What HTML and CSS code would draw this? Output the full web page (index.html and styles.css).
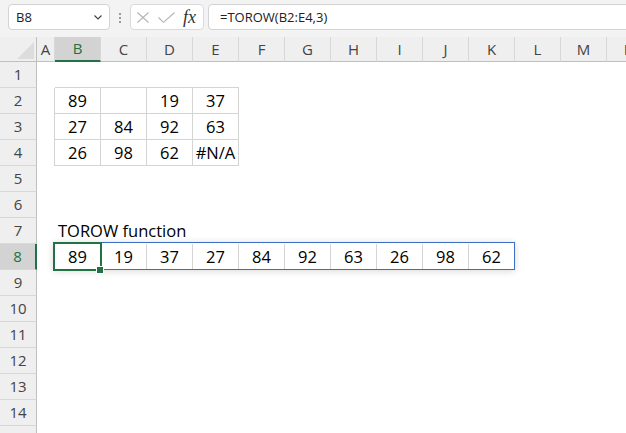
FILE: index.html
```html
<!DOCTYPE html>
<html lang="en">
<head>
<meta charset="utf-8">
<title>TOROW function</title>
<link rel="stylesheet" href="styles.css">
</head>
<body>
<div class="toolbar">
  <div class="namebox"><span>B8</span><svg class="chev" width="8" height="5" viewBox="0 0 8 5"><polyline points="0.5,0.5 4,4 7.5,0.5" fill="none" stroke="#444" stroke-width="1.2"/></svg></div>
  <div class="grip"><span></span><span></span><span></span></div>
  <div class="fxbox">
    <svg class="ic-x" width="12" height="11" viewBox="0 0 12 11"><path d="M0.5 0.5 L11.5 10.5 M11.5 0.5 L0.5 10.5" stroke="#b4b4b4" stroke-width="1.1" fill="none"/></svg>
    <svg class="ic-ok" width="17" height="11" viewBox="0 0 17 11"><polyline points="0.5,5.5 5.5,10.3 16.5,0.5" stroke="#b4b4b4" stroke-width="1.1" fill="none"/></svg>
    <span class="fx">fx</span>
  </div>
  <div class="formula">=TOROW(B2:E4,3)</div>
</div>
<div class="sheet">
  <div class="row hrow">
    <div class="corner"><svg width="17" height="17" viewBox="0 0 17 17"><polygon points="17,0 17,17 0,17" fill="#dcdcdc"/></svg></div>
    <div class="ch">A</div><div class="ch sel">B</div><div class="ch">C</div><div class="ch">D</div><div class="ch">E</div><div class="ch">F</div><div class="ch">G</div><div class="ch">H</div><div class="ch">I</div><div class="ch">J</div><div class="ch">K</div><div class="ch">L</div><div class="ch">M</div><div class="ch">N</div>
  </div>
  <div class="row"><div class="rh">1</div><div class="c"></div><div class="c bb"></div><div class="c bb"></div><div class="c bb"></div><div class="c bb"></div></div>
  <div class="row"><div class="rh">2</div><div class="c br"></div><div class="c b">89</div><div class="c b"></div><div class="c b">19</div><div class="c b">37</div></div>
  <div class="row"><div class="rh">3</div><div class="c br"></div><div class="c b">27</div><div class="c b">84</div><div class="c b">92</div><div class="c b">63</div></div>
  <div class="row"><div class="rh">4</div><div class="c br"></div><div class="c b">26</div><div class="c b">98</div><div class="c b">62</div><div class="c b">#N/A</div></div>
  <div class="row"><div class="rh">5</div></div>
  <div class="row"><div class="rh">6</div></div>
  <div class="row"><div class="rh">7</div><div class="c"></div><div class="c label">TOROW function</div></div>
  <div class="row"><div class="rh sel">8</div><div class="c"></div>
    <div class="c s active">89<div class="spill"></div><div class="cursor"></div><div class="handle"></div></div>
    <div class="c s">19</div><div class="c s">37</div><div class="c s">27</div><div class="c s">84</div><div class="c s">92</div><div class="c s">63</div><div class="c s">26</div><div class="c s">98</div><div class="c s">62</div>
  </div>
  <div class="row"><div class="rh">9</div></div>
  <div class="row"><div class="rh">10</div></div>
  <div class="row"><div class="rh">11</div></div>
  <div class="row"><div class="rh">12</div></div>
  <div class="row"><div class="rh">13</div></div>
  <div class="row"><div class="rh">14</div></div>
  <div class="row"><div class="rh">15</div></div>
</div>
</body>
</html>
```
FILE: styles.css
```css
* { box-sizing: border-box; }
html, body { margin: 0; padding: 0; }
body {
  width: 626px;
  height: 433px;
  overflow: hidden;
  background: #fff;
  font-family: "Open Sans", "Noto Sans", sans-serif;
}

/* formula bar */
.toolbar {
  display: flex;
  align-items: flex-start;
  height: 37px;
  padding: 4px 0 0 8px;
  background: #f3f3f3;
}
.namebox {
  width: 102px;
  height: 26px;
  border: 1px solid #d3d3d3;
  border-radius: 4px;
  background: #fff;
  display: flex;
  align-items: center;
  justify-content: space-between;
  padding: 0 7px;
  font-size: 13px;
  line-height: 24px;
  color: #222;
}
.grip {
  display: flex;
  flex-direction: column;
  gap: 2px;
  margin: 9px 9px 0 9px;
}
.grip span {
  display: block;
  width: 2px;
  height: 2px;
  background: #9a9a9a;
}
.fxbox {
  width: 74px;
  height: 26px;
  border: 1px solid #dadada;
  border-radius: 4px;
  background: #fff;
  display: flex;
  align-items: center;
  padding-left: 6px;
}
.ic-ok { margin-left: 9px; }
.fx {
  margin-left: 8px;
  font-family: "Liberation Serif", "DejaVu Serif", serif;
  font-style: italic;
  font-size: 18px;
  line-height: 24px;
  color: #333;
}
.formula {
  flex: 1;
  height: 26px;
  margin-left: 4px;
  margin-right: -8px;
  border: 1px solid #d3d3d3;
  border-radius: 4px;
  background: #fff;
  padding-left: 11px;
  font-size: 13px;
  line-height: 24px;
  color: #222;
}

/* sheet grid */
.row {
  display: grid;
  grid-template-columns: 37px 18px repeat(13, 46px);
  height: 26px;
}
.hrow {
  height: 25px;
  background: #efefef;
}
.corner {
  border-right: 1px solid #bfbfbf;
  border-bottom: 1px solid #bfbfbf;
  display: flex;
  align-items: flex-end;
  justify-content: flex-end;
  padding: 0 2px 2px 0;
}
.corner svg { display: block; }
.ch {
  border-right: 1px solid #d8d8d8;
  border-bottom: 1px solid #bfbfbf;
  text-align: center;
  font-size: 15px;
  line-height: 24px;
  color: #444;
}
.ch.sel {
  background: #d3d3d3;
  border-bottom: 2px solid #217346;
  line-height: 23px;
  color: #1e7145;
}
.rh {
  background: #efefef;
  border-right: 1px solid #bfbfbf;
  border-bottom: 1px solid #d8d8d8;
  text-align: center;
  font-size: 15px;
  line-height: 25px;
  color: #444;
}
.rh.sel {
  background: #d3d3d3;
  border-right: 2px solid #217346;
  color: #1e7145;
}
.c {
  font-size: 16.5px;
  line-height: 25px;
  text-align: center;
  color: #000;
  white-space: nowrap;
}
.b {
  border-right: 1px solid #d4d4d4;
  border-bottom: 1px solid #d4d4d4;
}
.br { border-right: 1px solid #d4d4d4; }
.bb { border-bottom: 1px solid #d4d4d4; }
.s { border-right: 1px solid #d4d4d4; }
.label {
  text-align: left;
  padding-left: 3px;
  overflow: visible;
}

/* selection overlays */
.active { position: relative; }
.spill {
  position: absolute;
  left: -2px;
  top: -2px;
  width: 462px;
  height: 28px;
  border: 1px solid #3c6fc4;
  box-shadow: 0 1px 7px rgba(0, 0, 0, 0.16);
}
.cursor {
  position: absolute;
  left: -2px;
  top: -2px;
  width: 49px;
  height: 29px;
  border: 2px solid #217346;
}
.handle {
  position: absolute;
  left: 41px;
  top: 22px;
  width: 8px;
  height: 8px;
  background: #217346;
  border: 1px solid #fff;
}
```
